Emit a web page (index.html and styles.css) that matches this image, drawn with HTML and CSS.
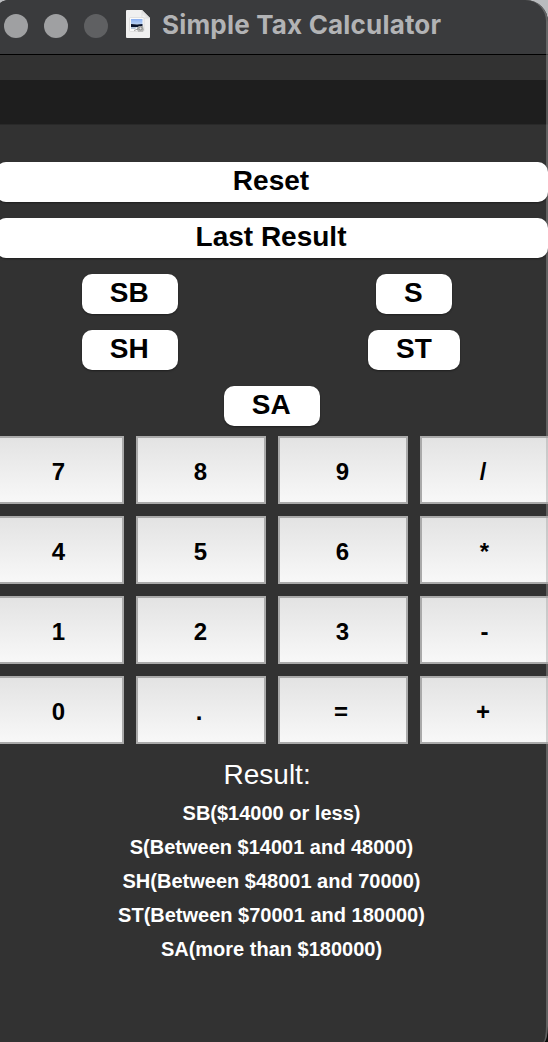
FILE: index.html
```html
<!DOCTYPE html>
<html lang="en">
<head>
<meta charset="utf-8">
<title>Simple Tax Calculator</title>
<link rel="stylesheet" href="styles.css">
</head>
<body>
<div class="window">
  <header class="titlebar">
    <span class="light"></span>
    <span class="light"></span>
    <span class="light light-dim"></span>
    <svg class="doc" width="26" height="30" viewBox="0 0 26 30">
      <defs>
        <linearGradient id="sky" x1="0" y1="0" x2="0" y2="1"><stop offset="0" stop-color="#8aaff0"/><stop offset="1" stop-color="#b9d3f5"/></linearGradient>
        <linearGradient id="fold" x1="0" y1="1" x2="1" y2="0"><stop offset="0" stop-color="#fff"/><stop offset="1" stop-color="#b8b8b8"/></linearGradient>
      </defs>
      <path d="M2 1H17L25 9V28Q25 29 24 29H2Q1 29 1 28V2Q1 1 2 1Z" fill="#f0f0f0"/>
      <path d="M17 1V8Q17 9 18 9H25Z" fill="url(#fold)" stroke="#c4c4c4" stroke-width=".4"/>
      <rect x="4.5" y="8.5" width="14.5" height="14" rx="1" fill="#fafafa" stroke="#d2d2d2" stroke-width=".6"/>
      <rect x="6" y="10" width="11.5" height="5.5" fill="url(#sky)"/>
      <path d="M6 15L12 15.6L17.5 15V18H6Z" fill="#07132d"/>
      <path d="M6 18H12L10 20H6Z" fill="#b6c6d8"/>
      <path d="M12 18.5L14 17H18L19 21.5H12Z" fill="#a7aaa8"/>
      <circle cx="15.5" cy="19.4" r="1.5" fill="#ddd" stroke="#777" stroke-width=".7"/>
      <path d="M9 21.5L13 20M13 22H18" stroke="#888" stroke-width=".8"/>
    </svg>
    <h1 class="title">Simple Tax Calculator</h1>
  </header>
  <div class="display"></div>
  <main class="content">
    <div class="actions">
      <button class="pill wide">Reset</button>
      <button class="pill wide">Last Result</button>
      <button class="pill">SB</button>
      <button class="pill">S</button>
      <button class="pill">SH</button>
      <button class="pill snug">ST</button>
      <button class="pill last">SA</button>
    </div>
    <div class="keys">
      <button class="key">7</button><button class="key">8</button><button class="key">9</button><button class="key shift">/</button>
      <button class="key">4</button><button class="key">5</button><button class="key">6</button><button class="key">*</button>
      <button class="key">1</button><button class="key">2</button><button class="key">3</button><button class="key">-</button>
      <button class="key">0</button><button class="key shift">.</button><button class="key shift">=</button><button class="key shift">+</button>
    </div>
    <section class="results">
      <p class="result">Result: </p>
      <p class="band">SB($14000 or less)</p>
      <p class="band">S(Between $14001 and 48000)</p>
      <p class="band">SH(Between $48001 and 70000)</p>
      <p class="band">ST(Between $70001 and 180000)</p>
      <p class="band">SA(more than $180000)</p>
    </section>
  </main>
</div>
</body>
</html>
```
FILE: styles.css
```css
* { box-sizing: border-box; }
html { background: linear-gradient(#b9bbbe 0 50%, #0c0c0c 50%); height: 100%; }
body { margin: 0; font-family: "Liberation Sans", Arial, sans-serif; overflow: hidden; }
.window {
  position: relative;
  height: 1042px;
  background: #323232;
  border-radius: 10px 22px 4px 0 / 4px 22px 16px 0;
  overflow: hidden;
}
.window::after {
  content: "";
  position: absolute;
  inset: -2px 0 -2px -20px;
  border: 2px solid rgba(160, 160, 160, .42);
  border-radius: 0 23px 5px 0 / 0 23px 18px 0;
  pointer-events: none;
}
.titlebar {
  display: flex;
  align-items: center;
  height: 55px;
  padding: 0 0 3px 4px;
  gap: 16px;
  background: #3a3b3d;
  border-bottom: 1px solid #000;
}
.light { width: 24px; height: 24px; border-radius: 50%; background: #9fa0a2; }
.light-dim { background: #5f6062; }
.doc { margin: -3px 0 0 1px; }
.title {
  margin: -2px 0 0 -5px;
  font: 700 26px/32px Inter, sans-serif;
  letter-spacing: .18px;
  color: #b2b3b5;
  white-space: nowrap;
}
.display { height: 45px; margin: 25px 0 37px; background: #1e1e1e; border-bottom: 1px solid #292929; }
.content { width: 556px; margin-left: -6px; }
.actions {
  display: grid;
  grid-template-columns: 272px 272px;
  column-gap: 12px;
  row-gap: 16px;
  justify-items: center;
}
.pill {
  position: relative;
  z-index: 1;
  height: 40px;
  padding: 0 29.5px 3px 28px;
  border: 0;
  border-radius: 10px;
  background: #fff;
  box-shadow: 0 1px 2px rgba(0, 0, 0, .4);
  color: #000;
  font: 700 28px/36px "Liberation Sans", Arial, sans-serif;
}
.snug { padding-right: 28px; }
.wide, .last { grid-column: 1 / -1; }
.wide { width: 552px; padding-right: 30px; }
.keys {
  display: grid;
  grid-template-columns: repeat(4, 130px);
  grid-auto-rows: 68px;
  gap: 12px;
  margin-top: 10px;
}
.key {
  padding: 3px 1px 0 0;
  border: 2px solid #aaa;
  background: linear-gradient(#e3e3e3, #f8f8f8);
  color: #000;
  font: 700 24px/28px "Liberation Sans", Arial, sans-serif;
}
.shift { padding-right: 4px; }
.results { padding-top: 14px; text-align: center; color: #fff; }
.results p { margin: 0; }
.results .result { font-size: 28px; line-height: 34px; white-space: pre; margin: 0 2px 4px 0; }
.results .band { font-size: 20px; font-weight: 700; line-height: 34px; padding-right: 1px; }
```
